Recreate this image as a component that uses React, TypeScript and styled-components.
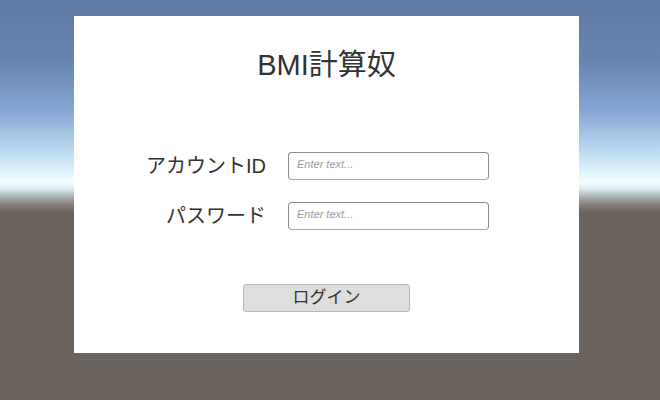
import React from 'react';
import styled, { createGlobalStyle } from 'styled-components';

const GlobalStyle = createGlobalStyle`
  html, body {
    margin: 0;
    padding: 0;
  }
  body {
    width: 660px;
    height: 400px;
    overflow: hidden;
    font-family: "Liberation Sans", "Noto Sans CJK JP", sans-serif;
    background: linear-gradient(
      180deg,
      #5e79a2 0px,
      #6784b0 60px,
      #84a6d2 110px,
      #bcd8f0 150px,
      #e0f6fc 174px,
      #f8fcff 182px,
      #d8eaf0 189px,
      #a8b0b0 197px,
      #857e78 205px,
      #6b635d 213px,
      #6b635d 400px
    );
  }
`;

const Scene = styled.div`
  width: 660px;
  height: 400px;
  padding: 16px 0 0 74px;
  box-sizing: border-box;
`;

const Panel = styled.div`
  width: 505px;
  height: 337px;
  background: #ffffff;
  display: flex;
  flex-direction: column;
  align-items: center;
  padding-top: 33px;
  box-sizing: border-box;
`;

const Title = styled.h1`
  margin: 0;
  font-size: 29px;
  line-height: 32px;
  font-weight: 400;
  color: #323232;
`;

const Form = styled.div`
  align-self: flex-start;
  margin: 71px 0 0 66px;
  display: grid;
  grid-template-columns: 126px 201px;
  column-gap: 22px;
  row-gap: 22px;
`;

const Label = styled.label`
  font-size: 20px;
  line-height: 28px;
  color: #323232;
  text-align: right;
  white-space: nowrap;
`;

const Field = styled.div`
  height: 28px;
  box-sizing: border-box;
  border: 1px solid #8c8c8c;
  border-bottom-color: #a8a8a8;
  border-radius: 4px;
  background: #ffffff;
  padding: 1px 0 0 8px;
`;

const Placeholder = styled.span`
  font-family: "Liberation Sans", sans-serif;
  font-style: italic;
  font-size: 11px;
  line-height: 14px;
  color: #9c9c9c;
`;

const LoginButton = styled.button`
  margin-top: 54px;
  width: 167px;
  height: 28px;
  box-sizing: border-box;
  background: #dedede;
  border: 1px solid #b8b8b8;
  border-radius: 3px;
  font-family: "Liberation Sans", "Noto Sans CJK JP", sans-serif;
  font-size: 17px;
  line-height: 24px;
  color: #323232;
  padding: 0;
  cursor: pointer;
`;

export default function App() {
  return (
    <>
      <GlobalStyle />
      <Scene>
        <Panel>
          <Title>BMI計算奴</Title>
          <Form>
            <Label>アカウントID</Label>
            <Field>
              <Placeholder>Enter text...</Placeholder>
            </Field>
            <Label>パスワード</Label>
            <Field>
              <Placeholder>Enter text...</Placeholder>
            </Field>
          </Form>
          <LoginButton>ログイン</LoginButton>
        </Panel>
      </Scene>
    </>
  );
}
